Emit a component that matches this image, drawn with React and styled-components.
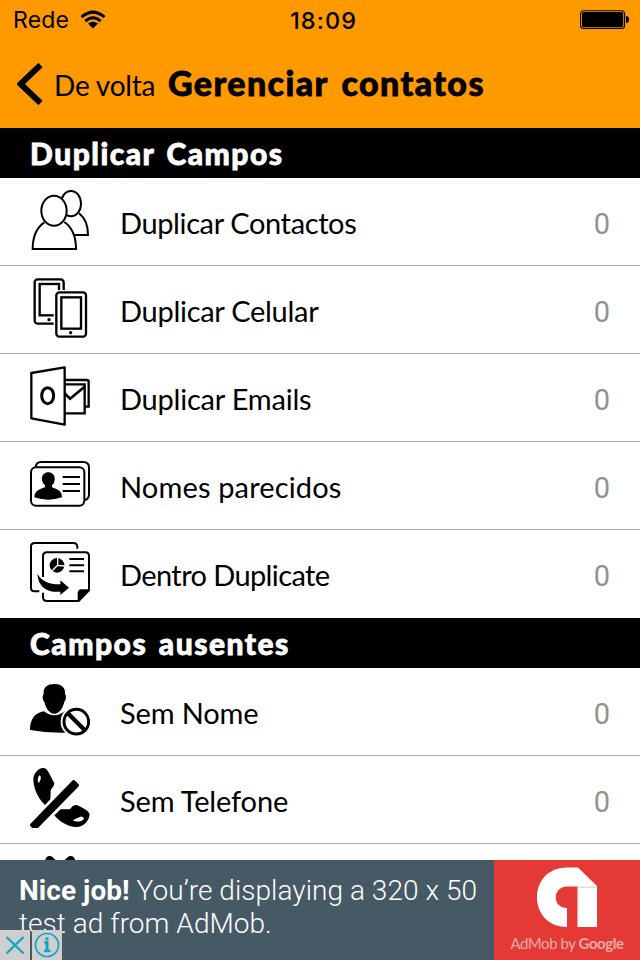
import React from "react";
import styled, { createGlobalStyle } from "styled-components";

const ContactsIcon = () => (
  <Icon viewBox="0 0 180 180">
    <ellipse cx="123" cy="41" rx="30" ry="38" />
    <path d="M147 70C165 84 174 108 174 135H130" />
    <path
      d="M8 178C8 138 20 113 44 97H104C126 112 138 140 138 178Z"
      fill="#fff"
      stroke="none"
    />
    <path d="M43 97C20 113 8 138 8 177H138C138 140 126 112 103 96" />
    <ellipse cx="72" cy="62" rx="38" ry="45" fill="#fff" />
  </Icon>
);

const PhonesIcon = () => (
  <Icon viewBox="0 0 180 180">
    <g strokeWidth="7">
      <rect x="14" y="4" width="87" height="133" rx="9" />
      <rect x="29" y="18" width="58" height="94" />
      <circle cx="57" cy="125" r="3" fill="#000" strokeWidth="4" />
      <rect
        x="71"
        y="36"
        width="104"
        height="144"
        fill="#fff"
        stroke="none"
      />
      <rect x="79" y="43" width="89" height="133" rx="9" />
      <rect x="94" y="58" width="59" height="94" />
      <circle cx="122" cy="164" r="3" fill="#000" strokeWidth="4" />
    </g>
  </Icon>
);

const OutlookIcon = () => (
  <Icon viewBox="0 0 180 180">
    <path
      d="M104 42H170Q176 42 176 48V122H166M104 55H164V142H104"
      strokeWidth="7"
    />
    <path d="M104 82L120 98L164 62" strokeWidth="8" />
    <path
      d="M4 21L104 4V176L4 157Z"
      fill="#fff"
      strokeWidth="7"
      strokeLinejoin="round"
    />
    <ellipse cx="53" cy="89" rx="18" ry="24" strokeWidth="9" />
  </Icon>
);

const CardIcon = () => (
  <Icon viewBox="0 0 180 180">
    <path d="M17 40Q18 24 34 24H160Q177 24 177 41V121Q177 136 164 138" />
    <rect x="3" y="40" width="160" height="115" rx="15" />
    <path
      d="M36 76C34 48 76 48 74 76C74 85 70 90 66 94V100C82 107 95 108 96 130Q55 144 13 130C14 110 27 107 45 100V94C40 89 36 84 36 76Z"
      fill="#000"
      stroke="none"
    />
    <path d="M98 69H150M98 90H150M98 111H150" />
  </Icon>
);

const CopyIcon = () => (
  <Icon viewBox="0 0 180 180">
    <path d="M142 20V16Q142 3 130 3H14Q3 3 3 14V138Q3 148 14 148H28" />
    <path d="M39 105V43Q39 31 51 31H166Q177 31 177 43V145L146 177H51Q39 177 39 166V152" />
    <path d="M143 178V154Q143 142 155 142H179Z" fill="#000" stroke="none" />
    <circle cx="81" cy="70" r="22" fill="#000" stroke="none" />
    <path d="M83 47V70L104 72M83 70L65 88" stroke="#fff" strokeWidth="4" />
    <path d="M118 51H162M118 70H162M118 88H162" />
    <path
      d="M22 95C34 118 60 128 91 127V115L117 137L91 159V149C55 152 24 138 22 95Z"
      fill="#000"
      stroke="none"
    />
  </Icon>
);

const NoNameIcon = () => (
  <Icon viewBox="0 0 180 180">
    <g fill="#000" stroke="none">
      <path d="M41 42C39 22 52 12 73 12S107 22 105 42C110 48 108 60 103 65C99 84 88 101 73 101S47 84 43 65C38 60 36 48 41 42Z" />
      <path d="M0 150C0 116 16 98 42 94Q73 118 104 94L124 102L112 158Q55 160 0 150Z" />
    </g>
    <circle cx="139" cy="125" r="47" fill="#fff" stroke="none" />
    <circle cx="139" cy="125" r="37" strokeWidth="9" />
    <path d="M112 98L166 152" strokeWidth="13" />
  </Icon>
);

const NoPhoneIcon = () => (
  <Icon viewBox="0 0 180 180">
    <g fill="#000" stroke="none">
      <path d="M10 34C10 14 28 0 39 0C52 0 56 13 73 46C72 59 60 62 62 74L61 94L45 111C31 99 10 67 10 34Z" />
      <path d="M73 142L92 124L116 124C125 124 124 111 139 111C151 115 176 127 179 139C177 161 158 179 136 177C110 175 88 160 73 142Z" />
    </g>
    <g fill="#fff" stroke="none">
      <path d="M29 22C33 24 34 33 30 38L26 46C21 37 24 26 29 22Z" />
      <path d="M128 157L149 147C155 143 160 147 162 152C156 161 140 164 128 157Z" />
    </g>
    <path d="M10 177L136 46" stroke="#fff" strokeWidth="34" />
    <path
      d="M5 171L131 41L142 52L15 182Z"
      fill="#000"
      strokeWidth="10"
      strokeLinejoin="round"
    />
  </Icon>
);

const NoEmailIcon = () => (
  <Icon viewBox="0 0 180 180">
    <path
      d="M59 13L122 76M122 13L59 76"
      strokeWidth="26"
      strokeLinecap="round"
    />
  </Icon>
);

const WifiIcon = () => (
  <svg width="26" height="20" viewBox="0 0 26 20">
    <path
      d="M1.5 7.2Q13-3 24.5 7.2M5.3 11.2Q13 4.3 20.7 11.2"
      fill="none"
      stroke="#000"
      strokeWidth="3"
    />
    <path d="M8 13.6Q13 9.7 18 13.6L13 18.6Z" />
  </svg>
);

const BatteryIcon = () => (
  <svg width="50" height="20" viewBox="0 0 50 20">
    <rect
      x="0.6"
      y="0.7"
      width="44"
      height="17.8"
      rx="3"
      fill="none"
      stroke="#000"
      strokeWidth="1.1"
    />
    <rect x="2" y="2" width="41.2" height="15.2" rx="1.6" />
    <path d="M46 6Q49 6 49 9.5T46 13Z" />
  </svg>
);

const AdMobLogo = () => (
  <svg width="60" height="61" viewBox="0 0 60 61">
    <path
      d="M30 0.5H41L60 19V60H40.5V19.5H30C15 20 15 41 30 41V60C-10 60-10 0.5 30 0.5Z"
      fill="#fff"
    />
    <path d="M41 19.5H59V21H41Z" fill="#dedede" />
  </svg>
);

const duplicates = [
  { label: "Duplicar Contactos", icon: <ContactsIcon />, spacing: -0.38 },
  { label: "Duplicar Celular", icon: <PhonesIcon />, spacing: -0.28 },
  { label: "Duplicar Emails", icon: <OutlookIcon />, spacing: -0.22 },
  { label: "Nomes parecidos", icon: <CardIcon />, spacing: 0.15 },
  { label: "Dentro Duplicate", icon: <CopyIcon />, spacing: -0.6 }
];

const missing = [
  { label: "Sem Nome", icon: <NoNameIcon />, spacing: -0.15 },
  { label: "Sem Telefone", icon: <NoPhoneIcon />, spacing: -0.15 },
  { label: "", icon: <NoEmailIcon />, spacing: 0 }
];

const Section = ({ title, items }) => (
  <>
    <SectionTitle>{title}</SectionTitle>
    {items.map((item, i) => (
      <Row key={item.label} $last={i === items.length - 1}>
        {item.icon}
        <Label $spacing={item.spacing}>{item.label}</Label>
        {item.label && <Count>0</Count>}
      </Row>
    ))}
  </>
);

const App = () => (
  <Screen>
    <GlobalStyle />
    <Header>
      <StatusBar>
        <Carrier>
          Rede <WifiIcon />
        </Carrier>
        <Clock>18:09</Clock>
        <Battery>
          <BatteryIcon />
        </Battery>
      </StatusBar>
      <NavBar>
        <svg width="26" height="42" viewBox="0 0 26 42">
          <path
            d="M23.5 2L3.5 21L23.5 40"
            fill="none"
            stroke="#000"
            strokeWidth="6"
          />
        </svg>
        <Back>De volta</Back>
        <Title>Gerenciar contatos</Title>
      </NavBar>
    </Header>
    <List>
      <Section title="Duplicar Campos" items={duplicates} />
      <Section title="Campos ausentes" items={missing} />
    </List>
    <Ad>
      <AdText>
        <b>Nice job!</b> You’re displaying a 320 x 50
        <br />
        test ad from AdMob.
      </AdText>
      <AdBrand>
        <AdMobLogo />
        <AdCaption>
          AdMob by <b>Google</b>
        </AdCaption>
      </AdBrand>
      <AdButtons>
        <AdButton>
          <svg width="30" height="30" viewBox="0 0 30 30">
            <path d="M6.5 7L23.5 23.5M23.5 7L6.5 23.5" />
          </svg>
        </AdButton>
        <AdButton>
          <svg width="30" height="30" viewBox="0 0 30 30">
            <circle cx="15" cy="15" r="11.5" strokeWidth="1.7" />
            <path d="M12.5 12.5H15V21" strokeWidth="3" />
            <path d="M12 21H18.5" />
            <path d="M13.5 8.8H16.5" strokeWidth="3" />
          </svg>
        </AdButton>
      </AdButtons>
    </Ad>
  </Screen>
);

const GlobalStyle = createGlobalStyle`
  body {
    margin: 0;
    background: #fff;
  }
`;

const Screen = styled.div`
  display: flex;
  flex-direction: column;
  width: 640px;
  height: 960px;
  overflow: hidden;
  color: #000;
  font-family: Lato, "Liberation Sans", sans-serif;
`;

const Header = styled.header`
  flex: none;
  height: 128px;
  background: #ff9900;
`;

const StatusBar = styled.div`
  display: grid;
  grid-template-columns: 1fr auto 1fr;
  align-items: center;
  height: 40px;
  padding: 0 10px 0 13px;
  font-family: Inter, sans-serif;
  font-size: 23.5px;
`;

const Carrier = styled.div`
  display: flex;
  align-items: center;
  gap: 11px;
  font-size: 23px;
  letter-spacing: 0.2px;
`;

const Clock = styled.div`
  padding-left: 4px;
  font-weight: 500;
  letter-spacing: 1.1px;
`;

const Battery = styled.div`
  display: flex;
  justify-content: flex-end;
`;

const NavBar = styled.div`
  display: flex;
  align-items: center;
  height: 88px;
  padding-left: 17px;
`;

const Back = styled.span`
  margin-left: 11px;
  padding-top: 2px;
  width: 114px;
  font-size: 28px;
  letter-spacing: -0.2px;
  white-space: nowrap;
`;

const Title = styled.h1`
  margin: 0 0 3px;
  font-size: 34px;
  font-weight: 900;
  letter-spacing: 1.4px;
  word-spacing: 4px;
  white-space: nowrap;
  -webkit-text-stroke: 0.8px #000;
`;

const List = styled.main`
  flex: 1;
  min-height: 0;
  overflow: hidden;
`;

const SectionTitle = styled.h2`
  display: flex;
  align-items: center;
  height: 50px;
  margin: 0;
  padding: 0 0 0 30px;
  box-sizing: border-box;
  background: #000;
  color: #fff;
  font-size: 30px;
  font-weight: 900;
  letter-spacing: 1.5px;
  word-spacing: 3px;
  -webkit-text-stroke: 0.8px #fff;
`;

const Row = styled.div`
  display: flex;
  align-items: center;
  height: 88px;
  padding: 0 30px 3px 30px;
  box-sizing: border-box;
  border-bottom: 1px solid ${props => (props.$last ? "#fff" : "#aaa")};
`;

const Icon = styled.svg`
  flex: none;
  width: 60px;
  height: 60px;
  fill: none;
  stroke: #000;
  stroke-width: 6;
`;

const Label = styled.span`
  flex: 1;
  margin-left: 30px;
  padding-top: 5px;
  font-size: 29px;
  letter-spacing: ${props => props.$spacing}px;
`;

const Count = styled.span`
  padding-top: 8px;
  color: #929292;
  font-family: Roboto, sans-serif;
  font-size: 29px;
`;

const Ad = styled.aside`
  position: relative;
  display: flex;
  flex: none;
  height: 100px;
  background: #465a65;
  font-family: Roboto, sans-serif;
`;

const AdText = styled.p`
  flex: 1;
  margin: 0;
  padding: 14px 0 0 19px;
  color: #fff;
  font-size: 28px;
  font-weight: 300;
  line-height: 33px;
  letter-spacing: 0.05px;
  white-space: nowrap;

  b {
    font-weight: 700;
  }
`;

const AdBrand = styled.div`
  display: flex;
  flex-direction: column;
  align-items: center;
  width: 146px;
  padding-top: 7px;
  box-sizing: border-box;
  background: #e53935;
`;

const AdCaption = styled.span`
  margin-top: 5px;
  color: #f6aaa8;
  font-family: Lato, sans-serif;
  font-size: 15px;
  letter-spacing: -0.45px;
  line-height: 20px;
  white-space: nowrap;

  b {
    font-weight: 700;
  }
`;

const AdButtons = styled.div`
  position: absolute;
  left: 0;
  bottom: 0;
  display: flex;
  gap: 2px;
`;

const AdButton = styled.div`
  width: 30px;
  height: 30px;
  background: #cfcfcf;

  svg {
    display: block;
    fill: none;
    stroke: #14a5c4;
    stroke-width: 2.4;
  }
`;

export default App;
